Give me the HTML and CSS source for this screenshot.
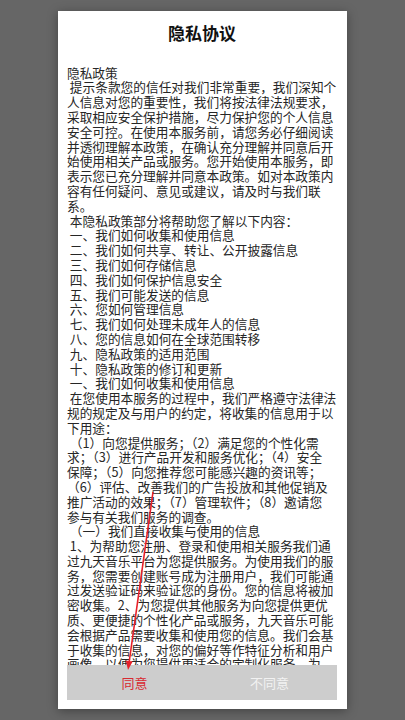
FILE: index.html
```html
<!DOCTYPE html>
<html lang="zh-CN">
<head>
<meta charset="utf-8">
<title>隐私协议</title>
<link rel="stylesheet" href="styles.css">
</head>
<body>
<div class="dialog">
  <h1 class="title">隐私协议</h1>
  <div class="content">
<p class="policy">隐私政策
 提示条款您的信任对我们非常重要，我们深知个
人信息对您的重要性，我们将按法律法规要求，
采取相应安全保护措施，尽力保护您的个人信息
安全可控。在使用本服务前，请您务必仔细阅读
并透彻理解本政策，在确认充分理解并同意后开
始使用相关产品或服务。您开始使用本服务，即
表示您已充分理解并同意本政策。如对本政策内
容有任何疑问、意见或建议，请及时与我们联
系。
 本隐私政策部分将帮助您了解以下内容：
 一、我们如何收集和使用信息
 二、我们如何共享、转让、公开披露信息
 三、我们如何存储信息
 四、我们如何保护信息安全
 五、我们可能发送的信息
 六、您如何管理信息
 七、我们如何处理未成年人的信息
 八、您的信息如何在全球范围转移
 九、隐私政策的适用范围
 十、隐私政策的修订和更新
 一、我们如何收集和使用信息
 在您使用本服务的过程中，我们严格遵守法律法
规的规定及与用户的约定，将收集的信息用于以
下用途：
 （1）向您提供服务；（2）满足您的个性化需
求；（3）进行产品开发和服务优化；（4）安全
保障；（5）向您推荐您可能感兴趣的资讯等；
（6）评估、改善我们的广告投放和其他促销及
推广活动的效果；（7）管理软件；（8）邀请您
参与有关我们服务的调查。
 （一）我们直接收集与使用的信息
 1、为帮助您注册、登录和使用相关服务我们通
过九天音乐平台为您提供服务。为使用我们的服
务，您需要创建账号成为注册用户，我们可能通
过发送验证码来验证您的身份。您的信息将被加
密收集。2、为您提供其他服务为向您提供更优
质、更便捷的个性化产品或服务，九天音乐可能
会根据产品需要收集和使用您的信息。我们会基
于收集的信息，对您的偏好等作特征分析和用户
画像，以便为您提供更适合的定制化服务。为
</p>
  </div>
  <div class="actions">
    <button class="btn agree">同意</button>
    <button class="btn disagree">不同意</button>
  </div>
</div>
<svg class="arrow" width="405" height="720" viewBox="0 0 405 720">
  <line x1="153" y1="492" x2="129.3" y2="661" stroke="#e8202a" stroke-width="1.6"/>
  <polygon points="128,670 132.7,661.6 125.8,660.6" fill="#e8202a"/>
</svg>
</body>
</html>
```
FILE: styles.css
```css
html, body {
  margin: 0;
  height: 100%;
}

body {
  background: #666666;
  font-family: "Noto Sans CJK SC", "Noto Sans", sans-serif;
  position: relative;
  overflow: hidden;
}

.dialog {
  width: 289px;
  height: 698px;
  margin: 11px auto 0;
  background: #ffffff;
  box-shadow: 0 2px 10px rgba(0, 0, 0, 0.35);
  display: flex;
  flex-direction: column;
  padding: 0 10px 9px 9px;
  box-sizing: border-box;
}

.title {
  margin: 0;
  padding-top: 10px;
  font-size: 17px;
  line-height: 24px;
  font-weight: bold;
  color: #111111;
  text-align: center;
}

.content {
  margin-top: 20.6px;
  flex: 1;
  min-height: 0;
  overflow: hidden;
}

.policy {
  margin: 0;
  white-space: pre;
  font-size: 12.7px;
  line-height: 14.8px;
  color: #262626;
}

.actions {
  display: flex;
  height: 35px;
  background: #cdcdcd;
}

.btn {
  flex: 1;
  border: 0;
  background: none;
  padding: 0;
  font-family: "Noto Sans CJK SC", sans-serif;
  font-size: 13px;
}

.agree {
  color: #d82a32;
}

.disagree {
  color: #f2f2f2;
}

.arrow {
  position: absolute;
  left: 0;
  top: 0;
  pointer-events: none;
}
```
